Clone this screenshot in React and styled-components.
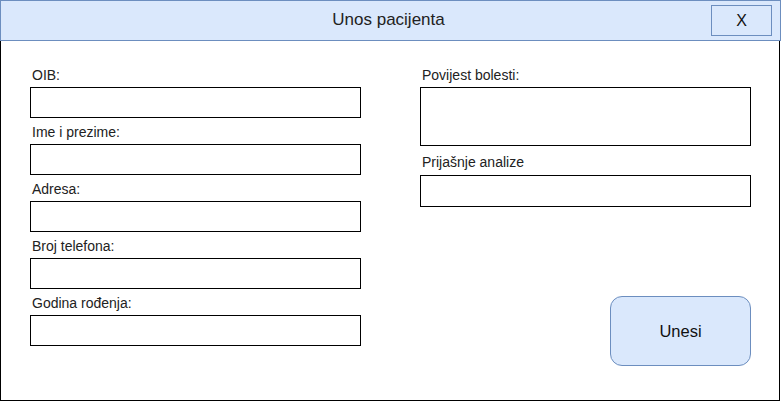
import React from "react";
import styled, { createGlobalStyle } from "styled-components";

const GlobalStyle = createGlobalStyle`
  html, body {
    margin: 0;
    padding: 0;
    background: #ffffff;
  }
  body {
    font-family: "Liberation Sans", Arial, sans-serif;
    color: #1a1a1a;
  }
`;

const Window = styled.div`
  width: 781px;
  height: 401px;
  display: flex;
  flex-direction: column;
  box-sizing: border-box;
`;

const TitleBar = styled.header`
  position: relative; // sits over the body's top border
  z-index: 1;
  box-sizing: border-box;
  width: 781px;
  height: 41px;
  padding: 4px 8px 0 0;
  display: grid;
  grid-template-columns: 1fr auto 1fr;
  align-items: start;
  background-color: #dae8fc;
  border: 1px solid #6c8ebf;
`;

const Title = styled.h1`
  grid-column: 2;
  margin: 0;
  padding: 5px 0 0 4px;
  font-size: 17px;
  line-height: 20px;
  font-weight: normal;
  color: #222;
`;

const CloseButton = styled.button`
  grid-column: 3;
  justify-self: end;
  box-sizing: border-box;
  width: 61px;
  height: 31px;
  padding: 0;
  background: transparent;
  border: 1px solid #6c8ebf;
  font-family: "Liberation Sans", Arial, sans-serif;
  font-size: 16px;
  color: #111;
  cursor: pointer;
`;

const Body = styled.main`
  box-sizing: border-box;
  width: 780px;
  height: 361px;
  margin-top: -1px;
  padding: 26px 0 0 29px;
  border: 1px solid #000;
  display: grid;
  grid-template-columns: 331px 331px;
  column-gap: 59px;
  align-items: start;
`;

const Column = styled.div`
  display: flex;
  flex-direction: column;
  gap: ${p => p.$gap}px;
`;

const Field = styled.div`
  display: flex;
  flex-direction: column;
`;

const Label = styled.label`
  padding-left: 2px;
  margin-bottom: ${p => p.$space || 4}px;
  font-size: 14px;
  line-height: 16px;
  color: #222;
`;

const Box = styled.div`
  box-sizing: border-box;
  height: ${p => p.$h}px;
  border: 1px solid #000;
  background: #fff;
`;

const SubmitButton = styled.button`
  align-self: flex-end;
  box-sizing: border-box;
  width: 141px;
  height: 70px;
  margin-top: ${p => p.$top}px;
  background-color: #dae8fc;
  border: 1px solid #6c8ebf;
  border-radius: 12px;
  font-family: "Liberation Sans", Arial, sans-serif;
  font-size: 16.5px;
  color: #111;
  cursor: pointer;
`;

const leftFields = [
  "OIB:",
  "Ime i prezime:",
  "Adresa:",
  "Broj telefona:",
  "Godina rođenja:"
];

function App() {
  return (
    <>
      <GlobalStyle />
      <Window>
        <TitleBar>
          <Title>Unos pacijenta</Title>
          <CloseButton>X</CloseButton>
        </TitleBar>

        <Body>
          <Column $gap={6}>
            {leftFields.map(name => (
              <Field key={name}>
                <Label>{name}</Label>
                <Box $h={31} />
              </Field>
            ))}
          </Column>

          <Column $gap={8}>
            <Field>
              <Label>Povijest bolesti:</Label>
              <Box $h={59} />
            </Field>
            <Field>
              <Label $space={5}>Prijašnje analize</Label>
              <Box $h={32} />
            </Field>
            <SubmitButton $top={81}>Unesi</SubmitButton>
          </Column>
        </Body>
      </Window>
    </>
  );
}

export default App;
